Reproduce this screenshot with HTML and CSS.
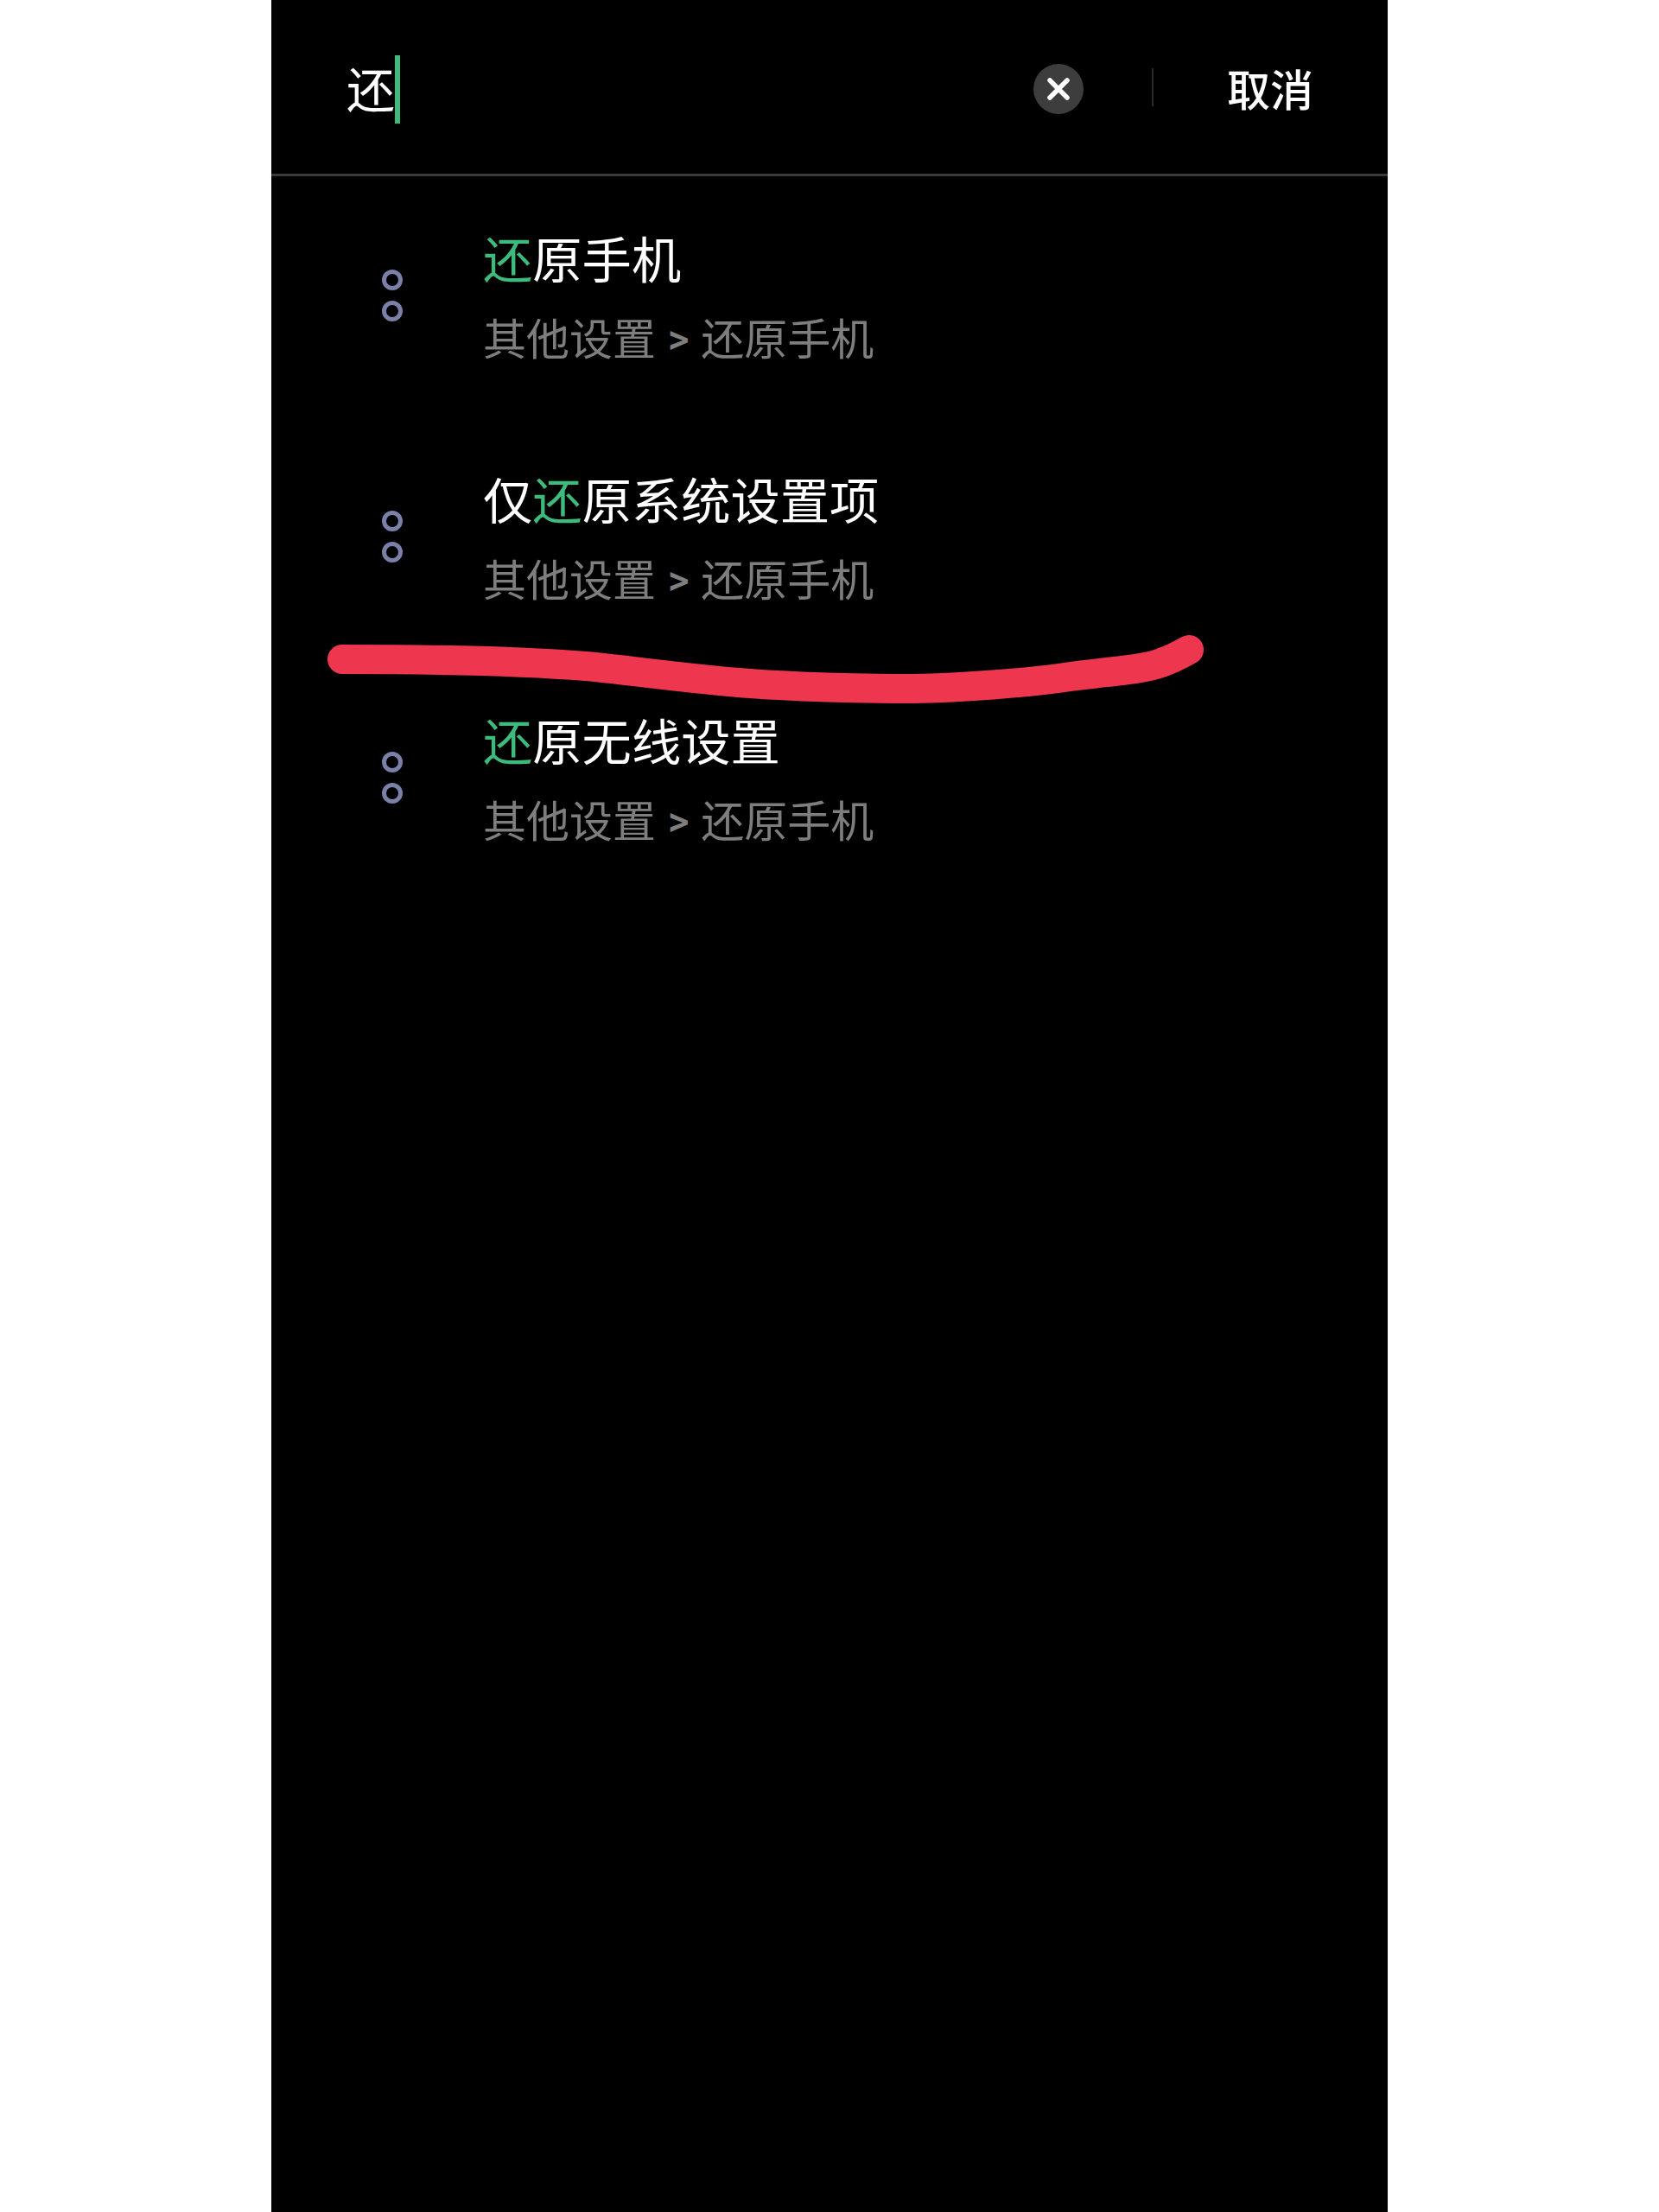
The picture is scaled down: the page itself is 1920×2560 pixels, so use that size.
FILE: index.html
```html
<!DOCTYPE html>
<html lang="zh-CN">

<head>
    <meta charset="utf-8" />
    <title>搜索设置</title>
    <link rel="stylesheet" href="styles.css">
</head>

<body>
    <div class="phone">
        <header class="searchBar">
            <div class="searchField">
                <span class="searchText">还</span>
                <span class="caret"></span>
            </div>
            <button class="clearBtn">
                <svg width="26" height="26" viewBox="0 0 26 26">
                    <path d="M3 3 L23 23 M23 3 L3 23" stroke="#fff" stroke-width="5.5" stroke-linecap="round" fill="none" />
                </svg>
            </button>
            <span class="barSep"></span>
            <span class="cancel">取消</span>
        </header>

        <ul class="results">
            <li class="result">
                <div class="dots"><span class="dot"></span><span class="dot"></span></div>
                <div class="resultText">
                    <div class="resultTitle"><em>还</em>原手机</div>
                    <div class="resultPath">其他设置 <span class="pathArrow">&gt;</span> 还原手机</div>
                </div>
            </li>
            <li class="result">
                <div class="dots"><span class="dot"></span><span class="dot"></span></div>
                <div class="resultText">
                    <div class="resultTitle">仅<em>还</em>原系统设置项</div>
                    <div class="resultPath">其他设置 <span class="pathArrow">&gt;</span> 还原手机</div>
                </div>
            </li>
            <li class="result">
                <div class="dots"><span class="dot"></span><span class="dot"></span></div>
                <div class="resultText">
                    <div class="resultTitle"><em>还</em>原无线设置</div>
                    <div class="resultPath">其他设置 <span class="pathArrow">&gt;</span> 还原手机</div>
                </div>
            </li>
        </ul>

        <!-- red marker stroke drawn over the screenshot -->
        <svg class="marker" width="1292" height="120" viewBox="0 0 1292 120">
            <path d="M82 33 C180 33 290 35 364 41 C430 47 510 60 587 63 C640 66 700 67 742 67 C800 66 880 60 925 53 C970 47 1010 45 1030 37 C1045 32 1055 26 1062 22"
                stroke="#ee364f" stroke-width="34" stroke-linecap="round" stroke-linejoin="round" fill="none" />
        </svg>
    </div>
</body>

</html>
```

FILE: styles.css
```css
html,
body {
    margin: 0;
    background: #fff;
}

body {
    font-family: "Noto Sans CJK SC", "Liberation Sans", sans-serif;
}

.phone {
    position: relative;
    width: 1292px;
    height: 2560px;
    margin: 0 auto;
    background: #000;
    color: #fff;
    overflow: hidden;
}

.searchBar {
    display: flex;
    align-items: center;
    height: 201px;
    padding: 0 86px 0 87px;
    border-bottom: 3px solid #3a3a3a;
}

.searchField {
    flex: 1;
    display: flex;
    align-items: center;
}

.searchText {
    font-size: 56px;
    line-height: 80px;
}

.caret {
    width: 6px;
    height: 79px;
    margin-top: 5px;
    background: #3dbb7d;
}

.clearBtn {
    display: flex;
    align-items: center;
    justify-content: center;
    width: 58px;
    height: 58px;
    margin-top: 4px;
    padding: 0;
    border: none;
    border-radius: 50%;
    background: #3d3d3d;
}

.barSep {
    width: 2px;
    height: 44px;
    margin: 0 85px 0 79px;
    background: #2b2b2b;
}

.cancel {
    font-size: 50px;
    font-weight: 500;
    line-height: 60px;
}

.results {
    list-style: none;
    margin: 0;
    padding: 0;
}

.result {
    display: flex;
    align-items: center;
    height: 279px;
    padding-left: 128px;
}

.dots {
    display: flex;
    flex-direction: column;
    gap: 12px;
    margin-right: 93px;
    margin-bottom: 4px;
}

.dot {
    box-sizing: border-box;
    width: 24px;
    height: 24px;
    border: 5px solid #7b80a8;
    border-radius: 50%;
}

.resultText {
    display: flex;
    flex-direction: column;
    gap: 26px;
    margin-bottom: 6px;
}

.resultTitle {
    font-size: 57.3px;
    line-height: 70px;
}

.resultTitle em {
    font-style: normal;
    color: #3dbb7d;
}

.resultPath {
    font-size: 50px;
    line-height: 60px;
    color: #7e7e7e;
}

.pathArrow {
    margin: 0 2.5px;
    font-family: Roboto, sans-serif;
    font-size: 48px;
    font-weight: 500;
    line-height: 0;
    vertical-align: 2px;
}

.marker {
    position: absolute;
    left: 0;
    top: 730px;
}
```
